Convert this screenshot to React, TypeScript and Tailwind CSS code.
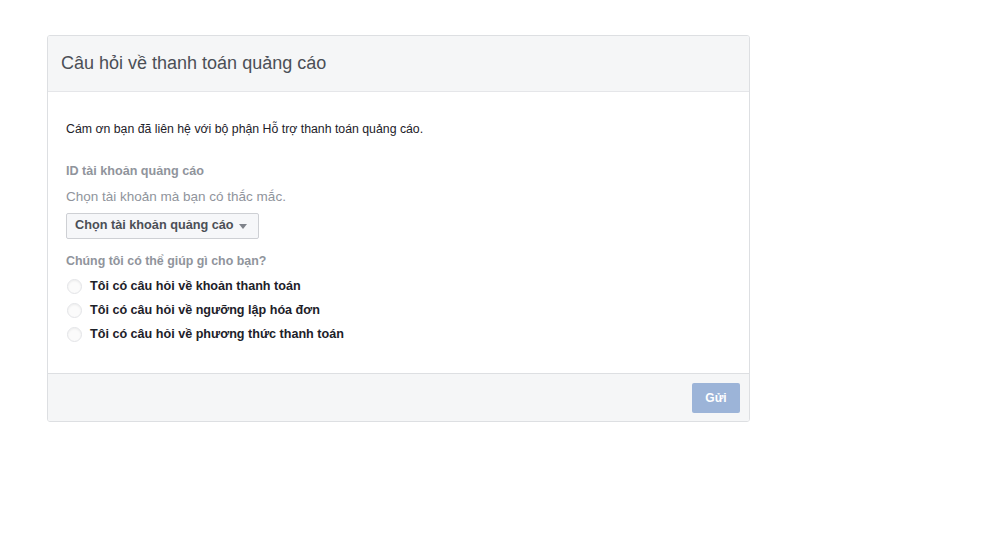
import { useState } from "react";

const options = [
  "Tôi có câu hỏi về khoản thanh toán",
  "Tôi có câu hỏi về ngưỡng lập hóa đơn",
  "Tôi có câu hỏi về phương thức thanh toán",
];

export default function App() {
  const [choice, setChoice] = useState<number | null>(null);

  return (
    <div className="min-h-[538px] bg-white pt-[35px] font-['Liberation_Sans',Arial,sans-serif]">
      <div className="ml-[47px] w-[703px] overflow-hidden rounded-[3px] border border-[#dddfe2] bg-white">
        <div className="flex h-[56px] items-center border-b border-[#e5e6e9] bg-[#f5f6f7] px-[13px]">
          <h1 className="text-[18px] text-[#4b4f56]">Câu hỏi về thanh toán quảng cáo</h1>
        </div>

        <div className="px-[18px] pb-[31px] pt-[28px]">
          <p className="text-[12.3px] text-[#1d2129]">
            Cám ơn bạn đã liên hệ với bộ phận Hỗ trợ thanh toán quảng cáo.
          </p>

          <p className="mt-[24px] text-[12.6px] font-bold text-[#90949c]">ID tài khoản quảng cáo</p>
          <p className="mt-[6px] text-[13.5px] text-[#90949c]">Chọn tài khoản mà bạn có thắc mắc.</p>

          <button className="mt-[5px] flex h-[26px] items-center gap-[5px] rounded-[2px] border border-[#ced0d4] bg-[#f6f7f9] pl-[8px] pr-[11px] text-[12.7px] font-bold text-[#4b4f56]">
            Chọn tài khoản quảng cáo
            <svg width="8" height="5" viewBox="0 0 8 5" className="mt-[1px]">
              <path d="M0 0h8L4 5z" fill="#7f838a" />
            </svg>
          </button>

          <p className="mt-[13px] text-[12.4px] font-bold text-[#90949c]">Chúng tôi có thể giúp gì cho bạn?</p>

          <div className="mt-[8px] flex flex-col gap-[8px]">
            {options.map((label, i) => (
              <label
                key={label}
                className="flex h-[16px] cursor-pointer items-center gap-[8px] pl-[1px] text-[12.6px] font-bold text-[#1d2129]"
                onClick={() => setChoice(i)}
              >
                <span className="flex h-[15px] w-[15px] items-center justify-center rounded-full border border-[#e3e4e7] bg-[#fbfbfb] shadow-[inset_0_1px_2px_rgba(0,0,0,0.06)]">
                  {choice === i && <span className="h-[6px] w-[6px] rounded-full bg-[#4267b2]" />}
                </span>
                {label}
              </label>
            ))}
          </div>
        </div>

        <div className="flex h-[48px] items-center justify-end border-t border-[#dddfe2] bg-[#f5f6f7] pr-[9px]">
          <button
            disabled={choice === null}
            className="h-[30px] w-[48px] rounded-[2px] bg-[#9cb4d8] text-[12px] font-bold text-white enabled:bg-[#4267b2]"
          >
            Gửi
          </button>
        </div>
      </div>
    </div>
  );
}
